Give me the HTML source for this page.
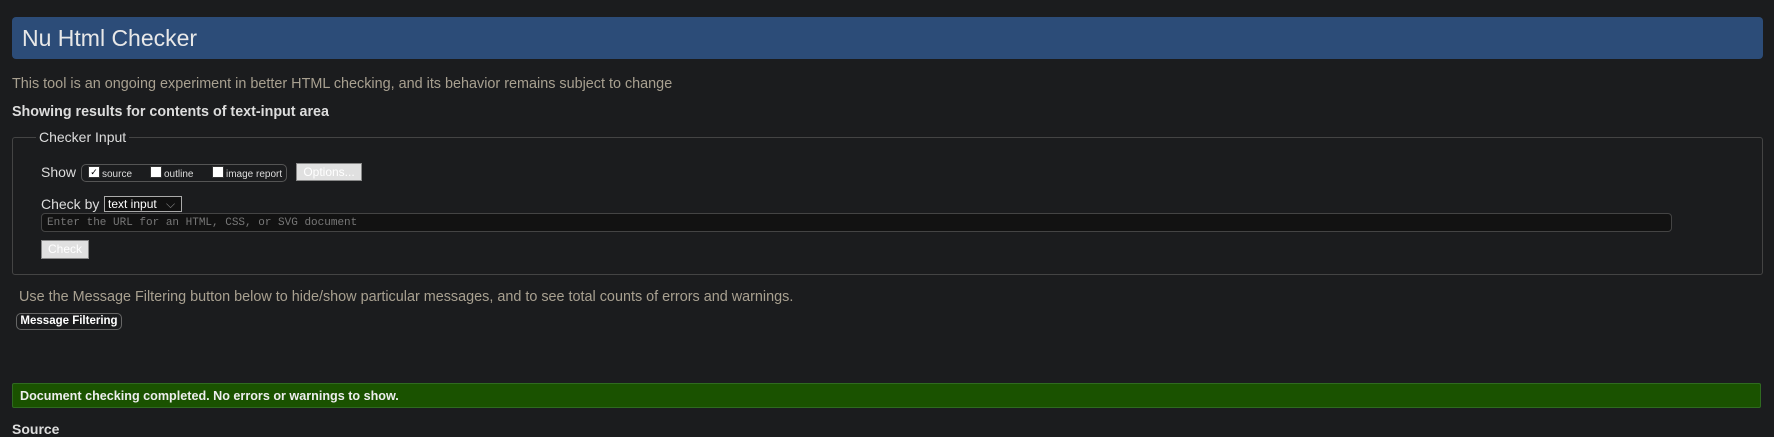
<!DOCTYPE html>
<html><head><style>
body{margin:0;width:1774px;height:434px;background:#1b1c1e;font-family:"Liberation Sans",Arial,sans-serif;color:#ccc;position:relative;overflow:hidden}
.a{position:absolute;white-space:nowrap}
.hdr{left:12px;top:17px;width:1751px;height:42px;background:#2c4c78;border-radius:4px}
.hdr span{position:absolute;left:10px;top:8px;font-size:23px;color:#e8e8e8}
.fs{left:12px;top:137px;width:1749px;height:136px;border:1px solid #444;border-radius:3px}
.lg{left:36px;top:129px;background:#1b1c1e;padding:0 3px;font-size:14px;color:#ddd}
.box{left:81px;top:164px;width:204px;height:16px;border:1px solid #555;border-radius:5px}
.cb{width:10px;height:10px;background:#fff;border:1px solid #333;display:inline-block}
.btn{background:#e0e0e0;color:#fff;font-size:12px;border:1px solid #888}
</style></head><body>
<div class="a hdr"><span>Nu Html Checker</span></div>
<div class="a" style="left:12px;top:76px;font-size:14.4px;color:#a8a090">This tool is an ongoing experiment in better HTML checking, and its behavior remains subject to change</div>
<div class="a" style="left:12px;top:104px;font-size:14.3px;font-weight:bold;color:#ddd">Showing results for contents of text-input area</div>
<div class="a fs"></div>
<div class="a lg">Checker Input</div>
<div class="a" style="left:41px;top:164px;font-size:14px;color:#ddd">Show</div>
<div class="a box"></div>
<div class="a cb" style="left:88px;top:166px;font-size:9px;line-height:10px;color:#000;text-align:center">✓</div>
<div class="a" style="left:102px;top:169px;font-size:10px;color:#ddd">source</div>
<div class="a cb" style="left:150px;top:166px"></div>
<div class="a" style="left:164px;top:169px;font-size:10px;color:#ddd">outline</div>
<div class="a cb" style="left:212px;top:166px"></div>
<div class="a" style="left:226px;top:169px;font-size:10px;color:#ddd">image report</div>
<div class="a btn" style="left:296px;top:163px;width:64px;height:16px;line-height:16px;text-align:center">Options...</div>
<div class="a" style="left:41px;top:196px;font-size:14px;color:#ddd">Check by</div>
<div class="a" style="left:104px;top:196px;width:73px;height:14px;border:1px solid #aaa;background:#111;font-size:12px;color:#fff;line-height:14px;padding-left:3px;box-sizing:content-box">text input <span style="color:#888;margin-left:6px">⌵</span></div>
<div class="a" style="left:41px;top:213px;width:1631px;height:19px;border:1px solid #444;border-radius:4px;background:#121212;font-family:'Liberation Mono',monospace;font-size:11px;color:#777;line-height:19px;padding-left:5px;box-sizing:border-box">Enter the URL for an HTML, CSS, or SVG document</div>
<div class="a btn" style="left:41px;top:240px;width:46px;height:17px;line-height:17px;text-align:center;font-size:12px">Check</div>
<div class="a" style="left:19px;top:289px;font-size:14.4px;color:#a8a090">Use the Message Filtering button below to hide/show particular messages, and to see total counts of errors and warnings.</div>
<div class="a" style="left:16px;top:313px;width:104px;height:15px;border:1px solid #666;border-radius:5px;font-size:11.5px;font-weight:bold;color:#fff;line-height:15px;text-align:center">Message Filtering</div>
<div class="a" style="left:12px;top:383px;width:1749px;height:25px;background:#1a5200;border:1px solid #2f6a20;border-radius:2px;font-size:12.6px;font-weight:bold;color:#eee;line-height:25px;padding-left:7px;box-sizing:border-box">Document checking completed. No errors or warnings to show.</div>
<div class="a" style="left:12px;top:421px;font-size:14px;font-weight:bold;color:#ddd">Source</div>
</body></html>
